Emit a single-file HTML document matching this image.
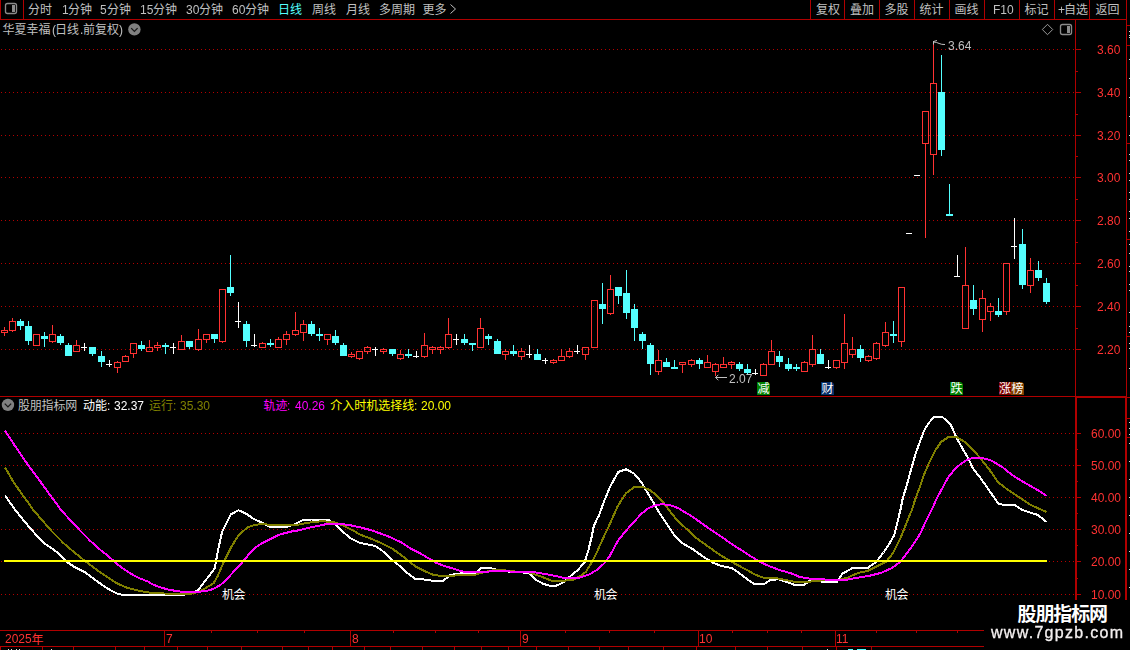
<!DOCTYPE html>
<html lang="zh"><head><meta charset="utf-8"><title>K-line chart</title>
<style>
html,body{margin:0;padding:0;background:#000}
body{width:1130px;height:650px;overflow:hidden;position:relative;font-family:"Liberation Sans",sans-serif;font-size:12px;line-height:12px;color:#c0c0c0}
svg{position:absolute;left:0;top:0}
svg text{font-family:"Liberation Sans","Noto Sans CJK SC",sans-serif;font-size:12px}
.t{position:absolute;white-space:nowrap;will-change:transform}
.h{position:absolute;left:0;top:0;width:0;height:0;overflow:hidden;font-size:0;line-height:0;color:transparent;white-space:nowrap}
</style></head><body>
<svg width="1130" height="650" viewBox="0 0 1130 650" shape-rendering="crispEdges">
<rect x="0" y="0" width="1" height="20" fill="#b00000"/>
<rect x="23" y="0" width="1" height="20" fill="#b00000"/>
<rect x="0" y="19" width="1127" height="1" fill="#b00000"/>
<rect x="810" y="0" width="1" height="20" fill="#b00000"/>
<rect x="844" y="0" width="1" height="20" fill="#b00000"/>
<rect x="879" y="0" width="1" height="20" fill="#b00000"/>
<rect x="914" y="0" width="1" height="20" fill="#b00000"/>
<rect x="949" y="0" width="1" height="20" fill="#b00000"/>
<rect x="984" y="0" width="1" height="20" fill="#b00000"/>
<rect x="1019" y="0" width="1" height="20" fill="#b00000"/>
<rect x="1054" y="0" width="1" height="20" fill="#b00000"/>
<rect x="1089" y="0" width="1" height="20" fill="#b00000"/>
<rect x="1126" y="0" width="1" height="397" fill="#b00000"/>
<rect x="1127" y="25" width="3" height="1" fill="#b00000"/>
<rect x="1127" y="45" width="3" height="1" fill="#b00000"/>
<rect x="1127" y="143" width="3" height="1" fill="#b00000"/>
<rect x="1127" y="239" width="3" height="1" fill="#b00000"/>
<rect x="1127" y="336" width="3" height="1" fill="#b00000"/>
<rect x="1129" y="31" width="1" height="1" fill="#d8d8d8"/>
<rect x="1129" y="35" width="1" height="1" fill="#d8d8d8"/>
<rect x="1129" y="37" width="1" height="1" fill="#d8d8d8"/>
<rect x="1129" y="59" width="1" height="1" fill="#d8d8d8"/>
<rect x="1129" y="78" width="1" height="1" fill="#d8d8d8"/>
<rect x="1129" y="97" width="1" height="1" fill="#d8d8d8"/>
<rect x="1129" y="116" width="1" height="1" fill="#d8d8d8"/>
<rect x="1129" y="135" width="1" height="1" fill="#d8d8d8"/>
<rect x="1129" y="154" width="1" height="1" fill="#d8d8d8"/>
<rect x="1129" y="160" width="1" height="1" fill="#d8d8d8"/>
<rect x="1129" y="173" width="1" height="1" fill="#d8d8d8"/>
<rect x="1129" y="180" width="1" height="1" fill="#d8d8d8"/>
<rect x="1129" y="192" width="1" height="1" fill="#d8d8d8"/>
<rect x="1129" y="199" width="1" height="1" fill="#d8d8d8"/>
<rect x="1129" y="211" width="1" height="1" fill="#d8d8d8"/>
<rect x="1129" y="218" width="1" height="1" fill="#d8d8d8"/>
<rect x="1129" y="231" width="1" height="1" fill="#d8d8d8"/>
<rect x="1129" y="244" width="1" height="1" fill="#d8d8d8"/>
<rect x="1129" y="253" width="1" height="1" fill="#d8d8d8"/>
<rect x="1129" y="266" width="1" height="1" fill="#d8d8d8"/>
<rect x="1129" y="271" width="1" height="1" fill="#d8d8d8"/>
<rect x="1129" y="284" width="1" height="1" fill="#d8d8d8"/>
<rect x="1129" y="290" width="1" height="1" fill="#d8d8d8"/>
<rect x="1129" y="312" width="1" height="1" fill="#d8d8d8"/>
<rect x="1129" y="326" width="1" height="1" fill="#d8d8d8"/>
<rect x="1129" y="332" width="1" height="1" fill="#d8d8d8"/>
<rect x="1129" y="343" width="1" height="1" fill="#d8d8d8"/>
<rect x="1129" y="348" width="1" height="1" fill="#d8d8d8"/>
<rect x="1129" y="368" width="1" height="1" fill="#d8d8d8"/>
<rect x="1075" y="19" width="1" height="378" fill="#b00000"/>
<rect x="0" y="396" width="1076" height="1" fill="#b00000"/>
<rect x="1075" y="396" width="52" height="2" fill="#b00000"/>
<rect x="1127" y="397" width="3" height="1" fill="#b00000"/>
<rect x="1075" y="397" width="2" height="233" fill="#b00000"/>
<rect x="1125" y="397" width="2" height="233" fill="#b00000"/>
<rect x="1127" y="418" width="3" height="1" fill="#b00000"/>
<rect x="1127" y="437" width="3" height="1" fill="#b00000"/>
<rect x="1129" y="422" width="1" height="1" fill="#d8d8d8"/>
<rect x="1129" y="428" width="1" height="1" fill="#d8d8d8"/>
<rect x="1129" y="434" width="1" height="1" fill="#d8d8d8"/>
<rect x="1129" y="443" width="1" height="1" fill="#d8d8d8"/>
<rect x="1129" y="461" width="1" height="1" fill="#d8d8d8"/>
<rect x="1129" y="479" width="1" height="1" fill="#d8d8d8"/>
<rect x="1129" y="497" width="1" height="1" fill="#d8d8d8"/>
<rect x="1129" y="515" width="1" height="1" fill="#d8d8d8"/>
<rect x="1129" y="533" width="1" height="1" fill="#d8d8d8"/>
<rect x="1129" y="551" width="1" height="1" fill="#d8d8d8"/>
<rect x="1129" y="569" width="1" height="1" fill="#d8d8d8"/>
<rect x="1129" y="587" width="1" height="1" fill="#d8d8d8"/>
<line x1="1" y1="49.5" x2="1074" y2="49.5" stroke="#b40000" stroke-width="1" stroke-dasharray="1 3"/>
<rect x="1075" y="49" width="6" height="1" fill="#b00000"/>
<rect x="1075" y="71" width="3" height="1" fill="#b00000"/>
<line x1="1" y1="92.5" x2="1074" y2="92.5" stroke="#b40000" stroke-width="1" stroke-dasharray="1 3"/>
<rect x="1075" y="92" width="6" height="1" fill="#b00000"/>
<rect x="1075" y="114" width="3" height="1" fill="#b00000"/>
<line x1="1" y1="135.5" x2="1074" y2="135.5" stroke="#b40000" stroke-width="1" stroke-dasharray="1 3"/>
<rect x="1075" y="135" width="6" height="1" fill="#b00000"/>
<rect x="1075" y="156" width="3" height="1" fill="#b00000"/>
<line x1="1" y1="177.5" x2="1074" y2="177.5" stroke="#b40000" stroke-width="1" stroke-dasharray="1 3"/>
<rect x="1075" y="177" width="6" height="1" fill="#b00000"/>
<rect x="1075" y="199" width="3" height="1" fill="#b00000"/>
<line x1="1" y1="220.5" x2="1074" y2="220.5" stroke="#b40000" stroke-width="1" stroke-dasharray="1 3"/>
<rect x="1075" y="220" width="6" height="1" fill="#b00000"/>
<rect x="1075" y="242" width="3" height="1" fill="#b00000"/>
<line x1="1" y1="263.5" x2="1074" y2="263.5" stroke="#b40000" stroke-width="1" stroke-dasharray="1 3"/>
<rect x="1075" y="263" width="6" height="1" fill="#b00000"/>
<rect x="1075" y="285" width="3" height="1" fill="#b00000"/>
<line x1="1" y1="306.5" x2="1074" y2="306.5" stroke="#b40000" stroke-width="1" stroke-dasharray="1 3"/>
<rect x="1075" y="306" width="6" height="1" fill="#b00000"/>
<rect x="1075" y="328" width="3" height="1" fill="#b00000"/>
<line x1="1" y1="349.5" x2="1074" y2="349.5" stroke="#b40000" stroke-width="1" stroke-dasharray="1 3"/>
<rect x="1075" y="349" width="6" height="1" fill="#b00000"/>
<line x1="1" y1="433.5" x2="1074" y2="433.5" stroke="#b40000" stroke-width="1" stroke-dasharray="1 3"/>
<rect x="1075" y="433" width="6" height="1" fill="#b00000"/>
<rect x="1075" y="449" width="3" height="1" fill="#b00000"/>
<line x1="1" y1="465.5" x2="1074" y2="465.5" stroke="#b40000" stroke-width="1" stroke-dasharray="1 3"/>
<rect x="1075" y="465" width="6" height="1" fill="#b00000"/>
<rect x="1075" y="481" width="3" height="1" fill="#b00000"/>
<line x1="1" y1="497.5" x2="1074" y2="497.5" stroke="#b40000" stroke-width="1" stroke-dasharray="1 3"/>
<rect x="1075" y="497" width="6" height="1" fill="#b00000"/>
<rect x="1075" y="513" width="3" height="1" fill="#b00000"/>
<line x1="1" y1="529.5" x2="1074" y2="529.5" stroke="#b40000" stroke-width="1" stroke-dasharray="1 3"/>
<rect x="1075" y="529" width="6" height="1" fill="#b00000"/>
<rect x="1075" y="545" width="3" height="1" fill="#b00000"/>
<line x1="1" y1="561.5" x2="1074" y2="561.5" stroke="#b40000" stroke-width="1" stroke-dasharray="1 3"/>
<rect x="1075" y="561" width="6" height="1" fill="#b00000"/>
<rect x="1075" y="578" width="3" height="1" fill="#b00000"/>
<line x1="1" y1="594.5" x2="1074" y2="594.5" stroke="#b40000" stroke-width="1" stroke-dasharray="1 3"/>
<rect x="1075" y="594" width="6" height="1" fill="#b00000"/>
<rect x="4" y="327" width="1" height="3" fill="#ff3232"/>
<rect x="4" y="333" width="1" height="3" fill="#ff3232"/>
<rect x="1.5" y="330.5" width="6" height="2" fill="none" stroke="#ff3232" stroke-width="1"/>
<rect x="12" y="318" width="1" height="3" fill="#ff3232"/>
<rect x="12" y="331" width="1" height="1" fill="#ff3232"/>
<rect x="9.5" y="321.5" width="6" height="9" fill="none" stroke="#ff3232" stroke-width="1"/>
<rect x="20" y="319" width="1" height="2" fill="#54ffff"/>
<rect x="20" y="326" width="1" height="4" fill="#54ffff"/>
<rect x="17" y="321" width="7" height="5" fill="#54ffff"/>
<rect x="28" y="321" width="1" height="5" fill="#54ffff"/>
<rect x="28" y="341" width="1" height="4" fill="#54ffff"/>
<rect x="25" y="326" width="7" height="15" fill="#54ffff"/>
<rect x="33.5" y="334.5" width="6" height="11" fill="none" stroke="#ff3232" stroke-width="1"/>
<rect x="44" y="332" width="1" height="4" fill="#54ffff"/>
<rect x="44" y="339" width="1" height="8" fill="#54ffff"/>
<rect x="41" y="336" width="7" height="3" fill="#54ffff"/>
<rect x="52" y="325" width="1" height="9" fill="#ff3232"/>
<rect x="52" y="342" width="1" height="1" fill="#ff3232"/>
<rect x="49.5" y="334.5" width="6" height="7" fill="none" stroke="#ff3232" stroke-width="1"/>
<rect x="60" y="334" width="1" height="2" fill="#54ffff"/>
<rect x="60" y="343" width="1" height="2" fill="#54ffff"/>
<rect x="57" y="336" width="7" height="7" fill="#54ffff"/>
<rect x="68" y="343" width="1" height="2" fill="#54ffff"/>
<rect x="65" y="345" width="7" height="11" fill="#54ffff"/>
<rect x="76" y="340" width="1" height="5" fill="#ff3232"/>
<rect x="73.5" y="345.5" width="6" height="6" fill="none" stroke="#ff3232" stroke-width="1"/>
<rect x="84" y="343" width="1" height="8" fill="#fff"/>
<rect x="81" y="347" width="6" height="1" fill="#fff"/>
<rect x="92" y="354" width="1" height="2" fill="#54ffff"/>
<rect x="89" y="347" width="7" height="7" fill="#54ffff"/>
<rect x="101" y="351" width="1" height="5" fill="#54ffff"/>
<rect x="101" y="362" width="1" height="5" fill="#54ffff"/>
<rect x="98" y="356" width="7" height="6" fill="#54ffff"/>
<rect x="109" y="360" width="1" height="7" fill="#fff"/>
<rect x="106" y="364" width="6" height="1" fill="#fff"/>
<rect x="117" y="361" width="1" height="1" fill="#ff3232"/>
<rect x="117" y="368" width="1" height="5" fill="#ff3232"/>
<rect x="114.5" y="362.5" width="6" height="5" fill="none" stroke="#ff3232" stroke-width="1"/>
<rect x="125" y="355" width="1" height="1" fill="#ff3232"/>
<rect x="122.5" y="356.5" width="6" height="5" fill="none" stroke="#ff3232" stroke-width="1"/>
<rect x="133" y="354" width="1" height="4" fill="#ff3232"/>
<rect x="130.5" y="343.5" width="6" height="10" fill="none" stroke="#ff3232" stroke-width="1"/>
<rect x="141" y="341" width="1" height="4" fill="#54ffff"/>
<rect x="141" y="349" width="1" height="2" fill="#54ffff"/>
<rect x="138" y="345" width="7" height="4" fill="#54ffff"/>
<rect x="149" y="340" width="1" height="7" fill="#ff3232"/>
<rect x="146.5" y="347.5" width="6" height="4" fill="none" stroke="#ff3232" stroke-width="1"/>
<rect x="157" y="342" width="1" height="3" fill="#ff3232"/>
<rect x="157" y="348" width="1" height="3" fill="#ff3232"/>
<rect x="154.5" y="345.5" width="6" height="2" fill="none" stroke="#ff3232" stroke-width="1"/>
<rect x="165" y="343" width="1" height="2" fill="#54ffff"/>
<rect x="165" y="347" width="1" height="7" fill="#54ffff"/>
<rect x="162" y="345" width="7" height="2" fill="#54ffff"/>
<rect x="173" y="343" width="1" height="11" fill="#fff"/>
<rect x="170" y="347" width="6" height="1" fill="#fff"/>
<rect x="181" y="335" width="1" height="6" fill="#ff3232"/>
<rect x="178.5" y="341.5" width="6" height="8" fill="none" stroke="#ff3232" stroke-width="1"/>
<rect x="189" y="347" width="1" height="2" fill="#54ffff"/>
<rect x="186" y="341" width="7" height="6" fill="#54ffff"/>
<rect x="198" y="329" width="1" height="10" fill="#ff3232"/>
<rect x="198" y="350" width="1" height="1" fill="#ff3232"/>
<rect x="195.5" y="339.5" width="6" height="10" fill="none" stroke="#ff3232" stroke-width="1"/>
<rect x="206" y="340" width="1" height="3" fill="#ff3232"/>
<rect x="203.5" y="334.5" width="6" height="5" fill="none" stroke="#ff3232" stroke-width="1"/>
<rect x="214" y="339" width="1" height="4" fill="#54ffff"/>
<rect x="211" y="334" width="7" height="5" fill="#54ffff"/>
<rect x="222" y="342" width="1" height="1" fill="#ff3232"/>
<rect x="219.5" y="289.5" width="6" height="52" fill="none" stroke="#ff3232" stroke-width="1"/>
<rect x="230" y="255" width="1" height="32" fill="#54ffff"/>
<rect x="230" y="293" width="1" height="3" fill="#54ffff"/>
<rect x="227" y="287" width="7" height="6" fill="#54ffff"/>
<rect x="238" y="302" width="1" height="26" fill="#fff"/>
<rect x="235" y="321" width="6" height="1" fill="#fff"/>
<rect x="246" y="321" width="1" height="3" fill="#54ffff"/>
<rect x="246" y="341" width="1" height="6" fill="#54ffff"/>
<rect x="243" y="324" width="7" height="17" fill="#54ffff"/>
<rect x="254" y="334" width="1" height="13" fill="#fff"/>
<rect x="251" y="345" width="6" height="1" fill="#fff"/>
<rect x="262" y="342" width="1" height="1" fill="#ff3232"/>
<rect x="259.5" y="343.5" width="6" height="4" fill="none" stroke="#ff3232" stroke-width="1"/>
<rect x="270" y="339" width="1" height="4" fill="#54ffff"/>
<rect x="270" y="345" width="1" height="2" fill="#54ffff"/>
<rect x="267" y="343" width="7" height="2" fill="#54ffff"/>
<rect x="278" y="337" width="1" height="2" fill="#ff3232"/>
<rect x="275.5" y="339.5" width="6" height="8" fill="none" stroke="#ff3232" stroke-width="1"/>
<rect x="286" y="331" width="1" height="3" fill="#ff3232"/>
<rect x="286" y="340" width="1" height="5" fill="#ff3232"/>
<rect x="283.5" y="334.5" width="6" height="5" fill="none" stroke="#ff3232" stroke-width="1"/>
<rect x="295" y="312" width="1" height="18" fill="#ff3232"/>
<rect x="295" y="335" width="1" height="1" fill="#ff3232"/>
<rect x="292.5" y="330.5" width="6" height="4" fill="none" stroke="#ff3232" stroke-width="1"/>
<rect x="303" y="320" width="1" height="4" fill="#ff3232"/>
<rect x="303" y="333" width="1" height="8" fill="#ff3232"/>
<rect x="300.5" y="324.5" width="6" height="8" fill="none" stroke="#ff3232" stroke-width="1"/>
<rect x="311" y="321" width="1" height="3" fill="#54ffff"/>
<rect x="311" y="334" width="1" height="2" fill="#54ffff"/>
<rect x="308" y="324" width="7" height="10" fill="#54ffff"/>
<rect x="319" y="328" width="1" height="6" fill="#54ffff"/>
<rect x="319" y="336" width="1" height="5" fill="#54ffff"/>
<rect x="316" y="334" width="7" height="2" fill="#54ffff"/>
<rect x="327" y="340" width="1" height="5" fill="#ff3232"/>
<rect x="324.5" y="334.5" width="6" height="5" fill="none" stroke="#ff3232" stroke-width="1"/>
<rect x="335" y="330" width="1" height="6" fill="#54ffff"/>
<rect x="335" y="343" width="1" height="2" fill="#54ffff"/>
<rect x="332" y="336" width="7" height="7" fill="#54ffff"/>
<rect x="343" y="343" width="1" height="2" fill="#54ffff"/>
<rect x="340" y="345" width="7" height="11" fill="#54ffff"/>
<rect x="351" y="352" width="1" height="2" fill="#ff3232"/>
<rect x="351" y="357" width="1" height="1" fill="#ff3232"/>
<rect x="348.5" y="354.5" width="6" height="2" fill="none" stroke="#ff3232" stroke-width="1"/>
<rect x="359" y="359" width="1" height="1" fill="#ff3232"/>
<rect x="356.5" y="351.5" width="6" height="7" fill="none" stroke="#ff3232" stroke-width="1"/>
<rect x="367" y="346" width="1" height="1" fill="#ff3232"/>
<rect x="367" y="352" width="1" height="2" fill="#ff3232"/>
<rect x="364.5" y="347.5" width="6" height="4" fill="none" stroke="#ff3232" stroke-width="1"/>
<rect x="375" y="347" width="1" height="9" fill="#fff"/>
<rect x="372" y="349" width="6" height="1" fill="#fff"/>
<rect x="383" y="348" width="1" height="1" fill="#ff3232"/>
<rect x="383" y="352" width="1" height="2" fill="#ff3232"/>
<rect x="380.5" y="349.5" width="6" height="2" fill="none" stroke="#ff3232" stroke-width="1"/>
<rect x="392" y="354" width="1" height="2" fill="#54ffff"/>
<rect x="389" y="349" width="7" height="5" fill="#54ffff"/>
<rect x="400" y="350" width="1" height="4" fill="#ff3232"/>
<rect x="400" y="359" width="1" height="1" fill="#ff3232"/>
<rect x="397.5" y="354.5" width="6" height="4" fill="none" stroke="#ff3232" stroke-width="1"/>
<rect x="408" y="349" width="1" height="5" fill="#54ffff"/>
<rect x="408" y="356" width="1" height="2" fill="#54ffff"/>
<rect x="405" y="354" width="7" height="2" fill="#54ffff"/>
<rect x="416" y="351" width="1" height="7" fill="#fff"/>
<rect x="413" y="356" width="6" height="1" fill="#fff"/>
<rect x="424" y="333" width="1" height="12" fill="#ff3232"/>
<rect x="424" y="357" width="1" height="1" fill="#ff3232"/>
<rect x="421.5" y="345.5" width="6" height="11" fill="none" stroke="#ff3232" stroke-width="1"/>
<rect x="432" y="346" width="1" height="1" fill="#ff3232"/>
<rect x="432" y="350" width="1" height="4" fill="#ff3232"/>
<rect x="429.5" y="347.5" width="6" height="2" fill="none" stroke="#ff3232" stroke-width="1"/>
<rect x="440" y="346" width="1" height="1" fill="#ff3232"/>
<rect x="440" y="350" width="1" height="4" fill="#ff3232"/>
<rect x="437.5" y="347.5" width="6" height="2" fill="none" stroke="#ff3232" stroke-width="1"/>
<rect x="448" y="318" width="1" height="16" fill="#ff3232"/>
<rect x="448" y="348" width="1" height="1" fill="#ff3232"/>
<rect x="445.5" y="334.5" width="6" height="13" fill="none" stroke="#ff3232" stroke-width="1"/>
<rect x="456" y="334" width="1" height="11" fill="#fff"/>
<rect x="453" y="339" width="6" height="1" fill="#fff"/>
<rect x="464" y="334" width="1" height="5" fill="#54ffff"/>
<rect x="464" y="343" width="1" height="2" fill="#54ffff"/>
<rect x="461" y="339" width="7" height="4" fill="#54ffff"/>
<rect x="472" y="345" width="1" height="6" fill="#54ffff"/>
<rect x="469" y="343" width="7" height="2" fill="#54ffff"/>
<rect x="480" y="318" width="1" height="10" fill="#ff3232"/>
<rect x="477.5" y="328.5" width="6" height="19" fill="none" stroke="#ff3232" stroke-width="1"/>
<rect x="488" y="334" width="1" height="2" fill="#54ffff"/>
<rect x="488" y="339" width="1" height="6" fill="#54ffff"/>
<rect x="485" y="336" width="7" height="3" fill="#54ffff"/>
<rect x="497" y="339" width="1" height="2" fill="#54ffff"/>
<rect x="494" y="341" width="7" height="13" fill="#54ffff"/>
<rect x="505" y="349" width="1" height="2" fill="#ff3232"/>
<rect x="505" y="355" width="1" height="5" fill="#ff3232"/>
<rect x="502.5" y="351.5" width="6" height="3" fill="none" stroke="#ff3232" stroke-width="1"/>
<rect x="513" y="345" width="1" height="6" fill="#54ffff"/>
<rect x="513" y="354" width="1" height="2" fill="#54ffff"/>
<rect x="510" y="351" width="7" height="3" fill="#54ffff"/>
<rect x="521" y="348" width="1" height="3" fill="#ff3232"/>
<rect x="521" y="357" width="1" height="3" fill="#ff3232"/>
<rect x="518.5" y="351.5" width="6" height="5" fill="none" stroke="#ff3232" stroke-width="1"/>
<rect x="529" y="345" width="1" height="13" fill="#fff"/>
<rect x="526" y="354" width="6" height="1" fill="#fff"/>
<rect x="537" y="349" width="1" height="5" fill="#54ffff"/>
<rect x="534" y="354" width="7" height="6" fill="#54ffff"/>
<rect x="545" y="358" width="1" height="6" fill="#fff"/>
<rect x="542" y="360" width="6" height="1" fill="#fff"/>
<rect x="553" y="359" width="1" height="1" fill="#ff3232"/>
<rect x="553" y="363" width="1" height="1" fill="#ff3232"/>
<rect x="550.5" y="360.5" width="6" height="2" fill="none" stroke="#ff3232" stroke-width="1"/>
<rect x="561" y="349" width="1" height="7" fill="#ff3232"/>
<rect x="558.5" y="356.5" width="6" height="4" fill="none" stroke="#ff3232" stroke-width="1"/>
<rect x="569" y="348" width="1" height="3" fill="#ff3232"/>
<rect x="569" y="357" width="1" height="1" fill="#ff3232"/>
<rect x="566.5" y="351.5" width="6" height="5" fill="none" stroke="#ff3232" stroke-width="1"/>
<rect x="577" y="345" width="1" height="9" fill="#fff"/>
<rect x="574" y="351" width="6" height="1" fill="#fff"/>
<rect x="585" y="355" width="1" height="5" fill="#ff3232"/>
<rect x="582.5" y="347.5" width="6" height="7" fill="none" stroke="#ff3232" stroke-width="1"/>
<rect x="591.5" y="300.5" width="6" height="47" fill="none" stroke="#ff3232" stroke-width="1"/>
<rect x="602" y="283" width="1" height="21" fill="#54ffff"/>
<rect x="602" y="309" width="1" height="15" fill="#54ffff"/>
<rect x="599" y="304" width="7" height="5" fill="#54ffff"/>
<rect x="610" y="275" width="1" height="14" fill="#ff3232"/>
<rect x="610" y="314" width="1" height="1" fill="#ff3232"/>
<rect x="607.5" y="289.5" width="6" height="24" fill="none" stroke="#ff3232" stroke-width="1"/>
<rect x="618" y="296" width="1" height="8" fill="#54ffff"/>
<rect x="615" y="287" width="7" height="9" fill="#54ffff"/>
<rect x="626" y="270" width="1" height="23" fill="#54ffff"/>
<rect x="626" y="313" width="1" height="6" fill="#54ffff"/>
<rect x="623" y="293" width="7" height="20" fill="#54ffff"/>
<rect x="634" y="304" width="1" height="5" fill="#54ffff"/>
<rect x="634" y="328" width="1" height="13" fill="#54ffff"/>
<rect x="631" y="309" width="7" height="19" fill="#54ffff"/>
<rect x="642" y="332" width="1" height="2" fill="#54ffff"/>
<rect x="642" y="341" width="1" height="8" fill="#54ffff"/>
<rect x="639" y="334" width="7" height="7" fill="#54ffff"/>
<rect x="650" y="343" width="1" height="2" fill="#54ffff"/>
<rect x="650" y="364" width="1" height="11" fill="#54ffff"/>
<rect x="647" y="345" width="7" height="19" fill="#54ffff"/>
<rect x="658" y="350" width="1" height="10" fill="#ff3232"/>
<rect x="658" y="372" width="1" height="3" fill="#ff3232"/>
<rect x="655.5" y="360.5" width="6" height="11" fill="none" stroke="#ff3232" stroke-width="1"/>
<rect x="666" y="358" width="1" height="4" fill="#54ffff"/>
<rect x="663" y="362" width="7" height="5" fill="#54ffff"/>
<rect x="674" y="360" width="1" height="7" fill="#54ffff"/>
<rect x="671" y="367" width="7" height="2" fill="#54ffff"/>
<rect x="682" y="365" width="1" height="8" fill="#ff3232"/>
<rect x="679.5" y="362.5" width="6" height="2" fill="none" stroke="#ff3232" stroke-width="1"/>
<rect x="691" y="359" width="1" height="1" fill="#ff3232"/>
<rect x="691" y="365" width="1" height="2" fill="#ff3232"/>
<rect x="688.5" y="360.5" width="6" height="4" fill="none" stroke="#ff3232" stroke-width="1"/>
<rect x="699" y="358" width="1" height="2" fill="#54ffff"/>
<rect x="699" y="364" width="1" height="5" fill="#54ffff"/>
<rect x="696" y="360" width="7" height="4" fill="#54ffff"/>
<rect x="707" y="355" width="1" height="7" fill="#ff3232"/>
<rect x="704.5" y="362.5" width="6" height="5" fill="none" stroke="#ff3232" stroke-width="1"/>
<rect x="715" y="363" width="1" height="1" fill="#ff3232"/>
<rect x="715" y="372" width="1" height="4" fill="#ff3232"/>
<rect x="712.5" y="364.5" width="6" height="7" fill="none" stroke="#ff3232" stroke-width="1"/>
<rect x="723" y="357" width="1" height="7" fill="#ff3232"/>
<rect x="720.5" y="364.5" width="6" height="3" fill="none" stroke="#ff3232" stroke-width="1"/>
<rect x="731" y="361" width="1" height="1" fill="#ff3232"/>
<rect x="731" y="365" width="1" height="4" fill="#ff3232"/>
<rect x="728.5" y="362.5" width="6" height="2" fill="none" stroke="#ff3232" stroke-width="1"/>
<rect x="739" y="362" width="1" height="2" fill="#54ffff"/>
<rect x="739" y="369" width="1" height="2" fill="#54ffff"/>
<rect x="736" y="364" width="7" height="5" fill="#54ffff"/>
<rect x="747" y="364" width="1" height="5" fill="#54ffff"/>
<rect x="747" y="373" width="1" height="1" fill="#54ffff"/>
<rect x="744" y="369" width="7" height="4" fill="#54ffff"/>
<rect x="755" y="369" width="1" height="6" fill="#fff"/>
<rect x="752" y="373" width="6" height="1" fill="#fff"/>
<rect x="763" y="363" width="1" height="1" fill="#ff3232"/>
<rect x="760.5" y="364.5" width="6" height="11" fill="none" stroke="#ff3232" stroke-width="1"/>
<rect x="771" y="340" width="1" height="11" fill="#ff3232"/>
<rect x="768.5" y="351.5" width="6" height="13" fill="none" stroke="#ff3232" stroke-width="1"/>
<rect x="779" y="351" width="1" height="5" fill="#54ffff"/>
<rect x="779" y="362" width="1" height="5" fill="#54ffff"/>
<rect x="776" y="356" width="7" height="6" fill="#54ffff"/>
<rect x="788" y="358" width="1" height="6" fill="#54ffff"/>
<rect x="788" y="369" width="1" height="2" fill="#54ffff"/>
<rect x="785" y="364" width="7" height="5" fill="#54ffff"/>
<rect x="796" y="364" width="1" height="3" fill="#54ffff"/>
<rect x="796" y="369" width="1" height="2" fill="#54ffff"/>
<rect x="793" y="367" width="7" height="2" fill="#54ffff"/>
<rect x="804" y="361" width="1" height="1" fill="#ff3232"/>
<rect x="801.5" y="362.5" width="6" height="9" fill="none" stroke="#ff3232" stroke-width="1"/>
<rect x="812" y="335" width="1" height="14" fill="#ff3232"/>
<rect x="812" y="365" width="1" height="2" fill="#ff3232"/>
<rect x="809.5" y="349.5" width="6" height="15" fill="none" stroke="#ff3232" stroke-width="1"/>
<rect x="820" y="349" width="1" height="5" fill="#54ffff"/>
<rect x="817" y="354" width="7" height="10" fill="#54ffff"/>
<rect x="828" y="360" width="1" height="9" fill="#fff"/>
<rect x="825" y="367" width="6" height="1" fill="#fff"/>
<rect x="836" y="368" width="1" height="1" fill="#ff3232"/>
<rect x="833.5" y="360.5" width="6" height="7" fill="none" stroke="#ff3232" stroke-width="1"/>
<rect x="844" y="314" width="1" height="29" fill="#ff3232"/>
<rect x="844" y="363" width="1" height="6" fill="#ff3232"/>
<rect x="841.5" y="343.5" width="6" height="19" fill="none" stroke="#ff3232" stroke-width="1"/>
<rect x="852" y="337" width="1" height="12" fill="#ff3232"/>
<rect x="852" y="355" width="1" height="3" fill="#ff3232"/>
<rect x="849.5" y="349.5" width="6" height="5" fill="none" stroke="#ff3232" stroke-width="1"/>
<rect x="860" y="345" width="1" height="4" fill="#54ffff"/>
<rect x="860" y="358" width="1" height="4" fill="#54ffff"/>
<rect x="857" y="349" width="7" height="9" fill="#54ffff"/>
<rect x="868" y="355" width="1" height="1" fill="#ff3232"/>
<rect x="868" y="361" width="1" height="1" fill="#ff3232"/>
<rect x="865.5" y="356.5" width="6" height="4" fill="none" stroke="#ff3232" stroke-width="1"/>
<rect x="876" y="342" width="1" height="1" fill="#ff3232"/>
<rect x="876" y="359" width="1" height="1" fill="#ff3232"/>
<rect x="873.5" y="343.5" width="6" height="15" fill="none" stroke="#ff3232" stroke-width="1"/>
<rect x="885" y="322" width="1" height="10" fill="#ff3232"/>
<rect x="885" y="346" width="1" height="1" fill="#ff3232"/>
<rect x="882.5" y="332.5" width="6" height="13" fill="none" stroke="#ff3232" stroke-width="1"/>
<rect x="893" y="321" width="1" height="13" fill="#54ffff"/>
<rect x="893" y="336" width="1" height="7" fill="#54ffff"/>
<rect x="890" y="334" width="7" height="2" fill="#54ffff"/>
<rect x="901" y="342" width="1" height="5" fill="#ff3232"/>
<rect x="898.5" y="287.5" width="6" height="54" fill="none" stroke="#ff3232" stroke-width="1"/>
<rect x="906" y="233" width="6" height="1" fill="#fff"/>
<rect x="914" y="175" width="6" height="1" fill="#fff"/>
<rect x="925" y="144" width="1" height="94" fill="#ff3232"/>
<rect x="922.5" y="111.5" width="6" height="32" fill="none" stroke="#ff3232" stroke-width="1"/>
<rect x="933" y="42" width="1" height="41" fill="#ff3232"/>
<rect x="933" y="155" width="1" height="20" fill="#ff3232"/>
<rect x="930.5" y="83.5" width="6" height="71" fill="none" stroke="#ff3232" stroke-width="1"/>
<rect x="941" y="55" width="1" height="37" fill="#54ffff"/>
<rect x="941" y="150" width="1" height="6" fill="#54ffff"/>
<rect x="938" y="92" width="7" height="58" fill="#54ffff"/>
<rect x="949" y="184" width="1" height="30" fill="#54ffff"/>
<rect x="946" y="214" width="7" height="2" fill="#54ffff"/>
<rect x="957" y="255" width="1" height="22" fill="#fff"/>
<rect x="954" y="276" width="6" height="1" fill="#fff"/>
<rect x="965" y="247" width="1" height="38" fill="#ff3232"/>
<rect x="962.5" y="285.5" width="6" height="43" fill="none" stroke="#ff3232" stroke-width="1"/>
<rect x="973" y="285" width="1" height="15" fill="#54ffff"/>
<rect x="973" y="309" width="1" height="6" fill="#54ffff"/>
<rect x="970" y="300" width="7" height="9" fill="#54ffff"/>
<rect x="982" y="290" width="1" height="8" fill="#ff3232"/>
<rect x="982" y="320" width="1" height="12" fill="#ff3232"/>
<rect x="979.5" y="298.5" width="6" height="21" fill="none" stroke="#ff3232" stroke-width="1"/>
<rect x="990" y="303" width="1" height="3" fill="#ff3232"/>
<rect x="990" y="312" width="1" height="9" fill="#ff3232"/>
<rect x="987.5" y="306.5" width="6" height="5" fill="none" stroke="#ff3232" stroke-width="1"/>
<rect x="998" y="298" width="1" height="13" fill="#54ffff"/>
<rect x="998" y="315" width="1" height="2" fill="#54ffff"/>
<rect x="995" y="311" width="7" height="4" fill="#54ffff"/>
<rect x="1006" y="312" width="1" height="3" fill="#ff3232"/>
<rect x="1003.5" y="263.5" width="6" height="48" fill="none" stroke="#ff3232" stroke-width="1"/>
<rect x="1014" y="218" width="1" height="41" fill="#fff"/>
<rect x="1011" y="246" width="6" height="1" fill="#fff"/>
<rect x="1022" y="229" width="1" height="15" fill="#54ffff"/>
<rect x="1022" y="285" width="1" height="4" fill="#54ffff"/>
<rect x="1019" y="244" width="7" height="41" fill="#54ffff"/>
<rect x="1030" y="258" width="1" height="12" fill="#ff3232"/>
<rect x="1030" y="286" width="1" height="7" fill="#ff3232"/>
<rect x="1027.5" y="270.5" width="6" height="15" fill="none" stroke="#ff3232" stroke-width="1"/>
<rect x="1038" y="261" width="1" height="9" fill="#54ffff"/>
<rect x="1038" y="278" width="1" height="3" fill="#54ffff"/>
<rect x="1035" y="270" width="7" height="8" fill="#54ffff"/>
<rect x="1046" y="278" width="1" height="5" fill="#54ffff"/>
<rect x="1046" y="302" width="1" height="2" fill="#54ffff"/>
<rect x="1043" y="283" width="7" height="19" fill="#54ffff"/>
<polyline points="5.0,495.4 14.2,508.5 25.5,522.7 35.4,534.1 45.3,544.0 56.6,551.8 66.5,561.7 75.0,567.3 85.0,572.3 96.3,580.8 107.6,588.6 117.5,593.8 123.2,595.0 133.1,594.7 141.6,595.0 150.0,595.5 164.2,595.2 181.2,595.2 192.5,593.1 198.1,590.2 203.8,582.5 209.5,575.4 214.4,569.0 215.8,562.6 217.3,554.1 219.4,544.2 222.2,531.5 226.5,523.0 230.7,514.5 238.5,510.2 246.3,513.8 253.4,518.7 263.3,523.3 270.4,527.0 285.9,527.0 294.4,524.4 304.2,519.5 311.3,519.5 328.3,519.9 335.4,524.4 342.5,531.5 351.0,538.6 359.5,542.8 368.0,544.5 375.0,545.9 382.1,550.6 390.6,558.4 399.1,565.5 407.6,573.3 414.7,578.6 424.6,579.6 433.1,580.8 443.0,580.8 447.3,577.5 450.0,575.1 457.1,573.7 464.2,573.3 475.5,573.3 480.4,568.3 488.2,567.6 495.3,569.4 506.6,571.4 520.8,572.3 529.3,573.3 536.4,580.3 543.5,583.9 550.5,586.0 556.2,585.7 563.3,582.5 570.4,576.1 577.4,570.4 584.5,562.6 588.1,551.3 591.6,537.2 593.7,526.5 596.3,520.7 598.7,515.9 600.6,510.8 604.8,499.5 609.8,487.4 614.0,479.6 618.3,471.9 626.1,469.3 633.8,473.3 641.6,482.5 647.3,492.4 653.0,501.6 657.7,510.0 665.5,522.0 674.0,534.8 682.5,543.3 692.4,548.9 702.3,556.0 712.2,562.4 722.1,566.2 732.0,568.1 739.1,573.0 747.6,579.4 754.0,583.9 764.6,583.9 770.3,579.7 778.8,579.4 787.3,582.2 794.3,584.8 795.7,585.0 804.2,585.0 811.2,579.4 824.0,582.2 836.7,582.2 842.4,573.7 852.3,568.1 867.9,567.8 876.4,561.7 883.5,552.5 889.1,544.0 894.1,535.5 896.9,524.2 900.4,510.0 902.7,498.6 907.0,484.5 911.2,468.9 916.2,451.9 920.4,440.6 924.7,429.2 928.9,422.9 933.6,416.9 942.4,416.9 950.9,425.0 956.5,437.7 963.6,450.5 968.6,459.0 972.8,468.1 980.9,478.6 989.6,491.0 998.2,503.4 1003.2,504.9 1014.3,504.9 1021.8,509.6 1030.5,512.7 1037.9,514.9 1046.6,522.0" fill="none" stroke="#ffffff" stroke-width="2" stroke-linejoin="round"/>
<polyline points="5.0,467.5 14.2,483.1 21.2,493.0 28.3,502.9 33.3,510.0 42.5,520.6 52.4,531.9 63.7,543.3 73.6,551.8 85.0,561.0 96.3,569.5 107.6,577.3 117.5,583.6 127.4,587.9 138.8,590.7 150.0,592.7 164.2,593.5 178.3,594.1 192.5,593.5 201.0,591.0 206.6,587.4 213.7,583.2 218.0,575.4 222.2,565.5 226.5,556.3 232.1,545.6 237.8,536.4 242.0,532.2 247.7,527.2 254.8,524.8 263.3,524.1 274.6,525.4 285.9,525.5 295.8,525.1 304.2,523.4 308.5,522.7 321.2,521.2 332.6,521.9 342.5,525.1 352.4,530.1 359.5,534.3 370.8,538.6 380.7,542.8 392.0,548.5 401.9,555.6 410.4,562.6 416.1,566.9 424.6,571.1 433.1,574.7 440.2,575.8 447.3,575.8 450.0,575.8 464.2,575.0 475.5,574.7 482.6,572.5 492.5,570.4 505.2,570.4 513.7,571.4 529.3,572.5 537.8,575.4 546.3,578.6 551.9,580.8 563.3,580.8 573.2,579.6 580.3,576.1 585.9,571.8 591.6,562.6 597.3,551.3 602.9,538.6 610.0,523.7 611.9,519.3 617.6,506.5 621.8,499.5 626.1,493.1 634.6,486.7 643.1,487.0 650.1,490.3 655.8,494.5 662.2,500.9 668.5,509.4 676.8,519.9 686.7,529.1 696.6,538.3 706.5,545.4 716.5,552.5 726.4,558.8 736.3,564.5 746.2,569.5 754.7,574.4 763.2,577.7 775.9,578.2 784.4,579.7 792.9,581.5 797.1,582.2 811.2,581.5 825.4,580.1 838.1,580.1 846.6,578.0 858.0,573.0 867.9,570.9 877.8,565.9 886.3,561.7 893.4,552.5 900.4,538.3 906.1,524.2 911.8,510.0 915.5,498.6 919.7,487.3 924.0,474.5 929.6,461.8 935.3,450.5 941.0,442.0 948.1,437.3 956.5,437.0 965.0,442.0 972.1,449.1 979.2,456.8 989.6,469.9 998.2,482.3 1006.9,489.1 1014.3,494.1 1021.8,499.0 1029.2,504.0 1037.9,508.3 1046.6,512.0" fill="none" stroke="#808000" stroke-width="2" stroke-linejoin="round"/>
<polyline points="5.0,430.7 14.2,444.8 28.3,465.4 42.5,484.5 49.6,494.4 56.6,503.6 60.9,510.0 70.8,520.6 80.7,531.2 90.6,541.2 99.1,548.9 109.0,556.7 117.5,564.5 127.4,571.6 137.3,577.3 148.7,581.9 150.0,583.2 158.5,586.7 167.0,589.3 178.3,591.4 186.8,592.1 196.7,591.9 206.6,591.0 213.7,588.8 220.8,584.6 226.5,579.6 233.5,571.8 242.0,562.6 249.1,554.1 256.2,547.1 263.3,542.5 271.8,538.3 280.3,534.3 291.6,531.5 300.0,530.1 308.5,527.9 318.4,525.8 328.3,523.7 338.2,523.7 349.6,525.1 359.5,527.2 370.8,530.1 380.7,533.6 392.0,537.9 401.9,542.8 410.4,548.5 420.4,553.4 427.4,557.7 435.9,562.6 444.4,566.2 450.0,567.6 458.5,570.4 465.6,572.1 478.3,571.8 492.5,571.4 506.6,571.4 520.8,571.8 535.0,572.3 546.3,574.2 556.2,576.1 563.3,577.9 571.8,578.2 580.3,577.5 588.8,574.7 597.3,569.7 604.3,563.3 610.0,555.6 617.6,541.2 626.1,530.6 633.1,522.8 641.6,513.6 648.7,508.0 655.8,505.1 662.2,504.1 670.0,505.1 678.5,508.2 681.1,510.0 691.0,515.7 700.9,522.7 710.8,529.8 720.7,536.2 730.6,543.3 740.5,549.6 750.4,556.0 760.4,562.1 770.3,566.6 780.2,570.2 790.1,573.0 797.2,575.8 798.5,576.5 807.0,578.4 818.3,579.0 832.5,580.1 846.6,579.7 858.0,577.7 869.3,575.8 880.6,573.0 891.9,568.1 900.4,561.7 907.5,552.5 914.6,542.6 920.3,533.4 925.9,521.3 931.6,510.0 936.7,498.6 942.4,488.0 948.1,477.4 955.1,468.9 960.8,463.9 967.2,459.7 973.5,457.8 982.0,458.0 990.5,460.1 1002.0,466.8 1011.9,474.9 1021.8,481.1 1031.7,486.6 1039.1,491.0 1046.6,495.9" fill="none" stroke="#ff00ff" stroke-width="2" stroke-linejoin="round"/>
<rect x="4" y="560" width="1043" height="2" fill="#ffff00"/>
<rect x="0" y="630" width="984" height="1" fill="#b00000"/>
<rect x="0" y="646" width="984" height="1" fill="#b00000"/>
<rect x="164" y="630" width="1" height="17" fill="#b00000"/>
<rect x="350" y="630" width="1" height="17" fill="#b00000"/>
<rect x="520" y="630" width="1" height="17" fill="#b00000"/>
<rect x="698" y="630" width="1" height="17" fill="#b00000"/>
<rect x="835" y="630" width="1" height="17" fill="#b00000"/>
<rect x="211" y="630" width="1" height="3" fill="#b00000"/>
<rect x="257" y="630" width="1" height="3" fill="#b00000"/>
<rect x="304" y="630" width="1" height="3" fill="#b00000"/>
<rect x="393" y="630" width="1" height="3" fill="#b00000"/>
<rect x="435" y="630" width="1" height="3" fill="#b00000"/>
<rect x="478" y="630" width="1" height="3" fill="#b00000"/>
<rect x="565" y="630" width="1" height="3" fill="#b00000"/>
<rect x="609" y="630" width="1" height="3" fill="#b00000"/>
<rect x="654" y="630" width="1" height="3" fill="#b00000"/>
<rect x="732" y="630" width="1" height="3" fill="#b00000"/>
<rect x="767" y="630" width="1" height="3" fill="#b00000"/>
<rect x="801" y="630" width="1" height="3" fill="#b00000"/>
<rect x="876" y="630" width="1" height="3" fill="#b00000"/>
<rect x="916" y="630" width="1" height="3" fill="#b00000"/>
<rect x="957" y="630" width="1" height="3" fill="#b00000"/>
<rect x="0" y="646" width="1" height="4" fill="#b00000"/>
<rect x="42" y="646" width="1" height="4" fill="#b00000"/>
<rect x="73" y="646" width="1" height="4" fill="#b00000"/>
<rect x="115" y="646" width="1" height="4" fill="#b00000"/>
<rect x="144" y="646" width="1" height="4" fill="#b00000"/>
<rect x="177" y="646" width="1" height="4" fill="#b00000"/>
<rect x="207" y="646" width="1" height="4" fill="#b00000"/>
<rect x="241" y="646" width="1" height="4" fill="#b00000"/>
<rect x="282" y="646" width="1" height="4" fill="#b00000"/>
<rect x="308" y="646" width="1" height="4" fill="#b00000"/>
<rect x="332" y="646" width="1" height="4" fill="#b00000"/>
<rect x="364" y="646" width="1" height="4" fill="#b00000"/>
<rect x="390" y="646" width="1" height="4" fill="#b00000"/>
<rect x="422" y="646" width="1" height="4" fill="#b00000"/>
<rect x="454" y="646" width="1" height="4" fill="#b00000"/>
<rect x="481" y="646" width="1" height="4" fill="#b00000"/>
<rect x="508" y="646" width="1" height="4" fill="#b00000"/>
<rect x="536" y="646" width="1" height="4" fill="#b00000"/>
<rect x="568" y="646" width="1" height="4" fill="#b00000"/>
<rect x="599" y="646" width="1" height="4" fill="#b00000"/>
<rect x="628" y="646" width="1" height="4" fill="#b00000"/>
<rect x="663" y="646" width="1" height="4" fill="#b00000"/>
<rect x="696" y="646" width="1" height="4" fill="#b00000"/>
<rect x="735" y="646" width="1" height="4" fill="#b00000"/>
<rect x="767" y="646" width="1" height="4" fill="#b00000"/>
<rect x="802" y="646" width="1" height="4" fill="#b00000"/>
<rect x="836" y="646" width="1" height="4" fill="#b00000"/>
<rect x="871" y="646" width="1" height="4" fill="#b00000"/>
<rect x="8" y="649" width="1" height="1" fill="#e0e0e0"/>
<rect x="11" y="649" width="1" height="1" fill="#e0e0e0"/>
<rect x="16" y="649" width="1" height="1" fill="#e0e0e0"/>
<rect x="19" y="649" width="1" height="1" fill="#e0e0e0"/>
<rect x="51" y="649" width="1" height="1" fill="#e0e0e0"/>
<rect x="827" y="649" width="1" height="1" fill="#e0e0e0"/>
<rect x="848" y="649" width="5" height="1" fill="#54ffff"/>
<rect x="857" y="649" width="9" height="1" fill="#54ffff"/>
<rect x="5.5" y="3.5" width="11" height="10" rx="2" ry="2" fill="none" stroke="#8a8a8a" stroke-width="1.35" shape-rendering="geometricPrecision"/>
<rect x="12" y="5" width="3" height="7" fill="#8c8c8c"/>
<polyline points="450.5,4.5 455.5,9 450.5,13.5" fill="none" stroke="#c0c0c0" stroke-width="1" shape-rendering="geometricPrecision"/>
<rect x="1060.5" y="24.5" width="11" height="10" rx="2" ry="2" fill="none" stroke="#8a8a8a" stroke-width="1.35" shape-rendering="geometricPrecision"/>
<rect x="1067" y="26" width="3" height="7" fill="#8c8c8c"/>
<path d="M757 382 H768 L770 384 V395 H757Z" fill="#008000" shape-rendering="geometricPrecision"/>
<path d="M821 382 H832 L834 384 V395 H821Z" fill="#08306b" shape-rendering="geometricPrecision"/>
<path d="M950 382 H961 L963 384 V395 H950Z" fill="#008000" shape-rendering="geometricPrecision"/>
<rect x="999" y="382" width="12" height="13" fill="#800000"/>
<path d="M1011 382 H1022 L1024 384 V395 H1011Z" fill="#804000" shape-rendering="geometricPrecision"/>
<rect x="984" y="600" width="146" height="50" fill="#000"/>
</svg>
<svg width="1130" height="650" viewBox="0 0 1130 650">
<text x="31.5" y="643.56" fill="#ff3232">年</text>
<text x="28" y="13.56" fill="#c0c0c0">分时</text>
<text x="68" y="13.56" fill="#c0c0c0">分钟</text>
<text x="107" y="13.56" fill="#c0c0c0">分钟</text>
<text x="153" y="13.56" fill="#c0c0c0">分钟</text>
<text x="199" y="13.56" fill="#c0c0c0">分钟</text>
<text x="245" y="13.56" fill="#c0c0c0">分钟</text>
<text x="278" y="13.56" fill="#54ffff">日线</text>
<text x="312" y="13.56" fill="#c0c0c0">周线</text>
<text x="346" y="13.56" fill="#c0c0c0">月线</text>
<text x="379" y="13.56" fill="#c0c0c0">多周期</text>
<text x="422.5" y="13.56" fill="#c0c0c0">更多</text>
<text x="816" y="13.56" fill="#c0c0c0">复权</text>
<text x="850" y="13.56" fill="#c0c0c0">叠加</text>
<text x="884.5" y="13.56" fill="#c0c0c0">多股</text>
<text x="919.5" y="13.56" fill="#c0c0c0">统计</text>
<text x="954.5" y="13.56" fill="#c0c0c0">画线</text>
<text x="1024.5" y="13.56" fill="#c0c0c0">标记</text>
<text x="1095.5" y="13.56" fill="#c0c0c0">返回</text>
<text x="1064" y="13.56" fill="#c0c0c0">自选</text>
<text x="2.5" y="34.06" fill="#c0c0c0">华夏幸福</text>
<text x="55" y="34.06" fill="#c0c0c0">日线</text>
<text x="83" y="34.06" fill="#c0c0c0">前复权</text>
<circle cx="134.4" cy="29.4" r="6.2" fill="#808080"/><polyline points="131.20000000000002,28.099999999999998 134.4,31.4 137.6,28.099999999999998" fill="none" stroke="#181818" stroke-width="1.3"/>
<path d="M1047.5 24.3 L1052.7 29.5 L1047.5 34.7 L1042.3 29.5Z" fill="none" stroke="#9a9a9a" stroke-width="1"/>
<path d="M933.5 41 L933.5 44.5 M933.5 41.5 L937 40.5 M933.5 42 C938 42 940 45 945 44.5" fill="none" stroke="#c0c0c0" stroke-width="1"/>
<path d="M715.5 377.5 L727 377.5 M718.3 374.8 L715.6 377.5 L718.3 380.2" fill="none" stroke="#c0c0c0" stroke-width="1"/>
<text x="757.5" y="393.06" fill="#ffffff">减</text>
<text x="821.5" y="393.06" fill="#ffffff">财</text>
<text x="950.5" y="393.06" fill="#ffffff">跌</text>
<text x="999" y="393.06" fill="#ffffff">涨</text>
<text x="1011.5" y="393.06" fill="#ffffff">榜</text>
<circle cx="7.95" cy="404.9" r="6.2" fill="#808080"/><polyline points="4.75,403.59999999999997 7.95,406.9 11.15,403.59999999999997" fill="none" stroke="#181818" stroke-width="1.3"/>
<text x="18" y="410.06" fill="#c0c0c0" letter-spacing="-0.2">股朋指标网</text>
<text x="83" y="410.06" fill="#ffffff">动能</text>
<text x="149" y="410.06" fill="#808000">运行</text>
<text x="263.5" y="410.06" fill="#ff00ff">轨迹</text>
<text x="330.3" y="410.06" fill="#ffff00">介入时机选择线</text>
<text x="222" y="598.56" fill="#ffffff" letter-spacing="-0.4">机会</text>
<text x="594" y="598.56" fill="#ffffff" letter-spacing="-0.4">机会</text>
<text x="885" y="598.56" fill="#ffffff" letter-spacing="-0.4">机会</text>
<text x="1017.6" y="621.32" fill="#ffffff" font-weight="bold" letter-spacing="-1.15" style="font-size:19px">股朋指标网</text>
</svg>
<span class="t" style="left:1097.40px;top:44.03px;color:#ff3232;font-size:12px;line-height:12px;">3.60</span>
<span class="t" style="left:1097.40px;top:87.03px;color:#ff3232;font-size:12px;line-height:12px;">3.40</span>
<span class="t" style="left:1097.40px;top:130.03px;color:#ff3232;font-size:12px;line-height:12px;">3.20</span>
<span class="t" style="left:1097.40px;top:172.03px;color:#ff3232;font-size:12px;line-height:12px;">3.00</span>
<span class="t" style="left:1097.40px;top:215.03px;color:#ff3232;font-size:12px;line-height:12px;">2.80</span>
<span class="t" style="left:1097.40px;top:258.03px;color:#ff3232;font-size:12px;line-height:12px;">2.60</span>
<span class="t" style="left:1097.40px;top:301.03px;color:#ff3232;font-size:12px;line-height:12px;">2.40</span>
<span class="t" style="left:1097.40px;top:344.03px;color:#ff3232;font-size:12px;line-height:12px;">2.20</span>
<span class="t" style="left:1090.80px;top:428.03px;color:#ff3232;font-size:12px;line-height:12px;">60.00</span>
<span class="t" style="left:1090.80px;top:460.03px;color:#ff3232;font-size:12px;line-height:12px;">50.00</span>
<span class="t" style="left:1090.80px;top:492.03px;color:#ff3232;font-size:12px;line-height:12px;">40.00</span>
<span class="t" style="left:1090.80px;top:524.03px;color:#ff3232;font-size:12px;line-height:12px;">30.00</span>
<span class="t" style="left:1090.80px;top:556.03px;color:#ff3232;font-size:12px;line-height:12px;">20.00</span>
<span class="t" style="left:1090.80px;top:589.03px;color:#ff3232;font-size:12px;line-height:12px;">10.00</span>
<span class="t" style="left:4.50px;top:633.03px;color:#ff3232;font-size:12px;line-height:12px;">2025</span>
<span class="h">年</span>
<span class="t" style="left:165.80px;top:633.03px;color:#ff3232;font-size:12px;line-height:12px;">7</span>
<span class="t" style="left:351.50px;top:633.03px;color:#ff3232;font-size:12px;line-height:12px;">8</span>
<span class="t" style="left:521.50px;top:633.03px;color:#ff3232;font-size:12px;line-height:12px;">9</span>
<span class="t" style="left:698.80px;top:633.03px;color:#ff3232;font-size:12px;line-height:12px;">10</span>
<span class="t" style="left:835.80px;top:633.03px;color:#ff3232;font-size:12px;line-height:12px;">11</span>
<span class="h">分时</span>
<span class="t" style="left:61.50px;top:4.03px;color:#c0c0c0;font-size:12px;line-height:12px;">1</span>
<span class="h">分钟</span>
<span class="t" style="left:100.30px;top:4.03px;color:#c0c0c0;font-size:12px;line-height:12px;">5</span>
<span class="h">分钟</span>
<span class="t" style="left:139.50px;top:4.03px;color:#c0c0c0;font-size:12px;line-height:12px;">15</span>
<span class="h">分钟</span>
<span class="t" style="left:185.80px;top:4.03px;color:#c0c0c0;font-size:12px;line-height:12px;">30</span>
<span class="h">分钟</span>
<span class="t" style="left:231.70px;top:4.03px;color:#c0c0c0;font-size:12px;line-height:12px;">60</span>
<span class="h">分钟</span>
<span class="h">日线</span>
<span class="h">周线</span>
<span class="h">月线</span>
<span class="h">多周期</span>
<span class="h">更多</span>
<span class="h">复权</span>
<span class="h">叠加</span>
<span class="h">多股</span>
<span class="h">统计</span>
<span class="h">画线</span>
<span class="h">标记</span>
<span class="h">返回</span>
<span class="t" style="left:992.50px;top:4.03px;color:#c0c0c0;font-size:12px;line-height:12px;">F10</span>
<span class="t" style="left:1057.50px;top:3.53px;color:#c0c0c0;font-size:12px;line-height:12px;">+</span>
<span class="h">自选</span>
<span class="h">华夏幸福</span>
<span class="t" style="left:51.60px;top:24.03px;color:#c0c0c0;font-size:12px;line-height:12px;">(</span>
<span class="h">日线</span>
<span class="t" style="left:79.50px;top:24.03px;color:#c0c0c0;font-size:12px;line-height:12px;">.</span>
<span class="h">前复权</span>
<span class="t" style="left:118.50px;top:24.03px;color:#c0c0c0;font-size:12px;line-height:12px;">)</span>
<span class="t" style="left:947.50px;top:40.03px;color:#c0c0c0;font-size:12px;line-height:12px;">3.64</span>
<span class="t" style="left:729.00px;top:373.03px;color:#c0c0c0;font-size:12px;line-height:12px;">2.07</span>
<span class="h">减</span>
<span class="h">财</span>
<span class="h">跌</span>
<span class="h">涨</span>
<span class="h">榜</span>
<span class="h">股朋指标网</span>
<span class="h">动能</span>
<span class="t" style="left:106.50px;top:400.03px;color:#fff;font-size:12px;line-height:12px;">:</span>
<span class="t" style="left:114.00px;top:400.03px;color:#fff;font-size:12px;line-height:12px;">32.37</span>
<span class="h">运行</span>
<span class="t" style="left:172.50px;top:400.03px;color:#808000;font-size:12px;line-height:12px;">:</span>
<span class="t" style="left:180.00px;top:400.03px;color:#808000;font-size:12px;line-height:12px;">35.30</span>
<span class="h">轨迹</span>
<span class="t" style="left:287.00px;top:400.03px;color:#ff00ff;font-size:12px;line-height:12px;">:</span>
<span class="t" style="left:294.80px;top:400.03px;color:#ff00ff;font-size:12px;line-height:12px;">40.26</span>
<span class="h">介入时机选择线</span>
<span class="t" style="left:413.50px;top:400.03px;color:#ffff00;font-size:12px;line-height:12px;">:</span>
<span class="t" style="left:421.00px;top:400.03px;color:#ffff00;font-size:12px;line-height:12px;">20.00</span>
<span class="h">机会</span>
<span class="h">机会</span>
<span class="h">机会</span>
<span class="h">股朋指标网</span>
<span class="t" style="left:991.00px;top:625.21px;color:#f4f0f0;font-size:16px;line-height:16px;letter-spacing:1.3px;-webkit-text-stroke:0.3px #f4f0f0;">www.7gpzb.com</span>
</body></html>
